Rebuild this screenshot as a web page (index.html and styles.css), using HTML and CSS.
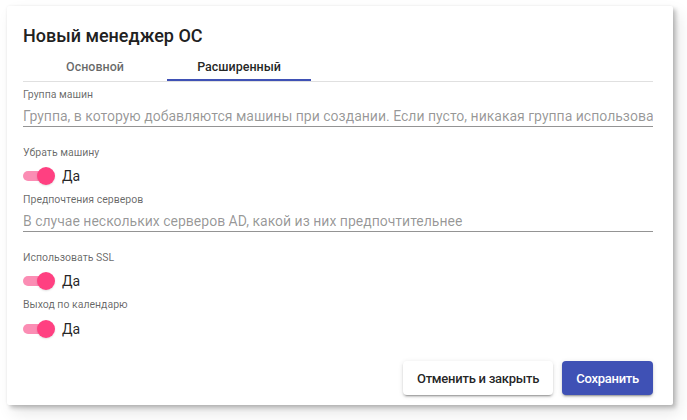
FILE: index.html
```html
<!DOCTYPE html>
<html lang="ru">

<head>
	<meta charset="UTF-8">
	<meta name="viewport" content="width=device-width, initial-scale=1.0">
	<title>Новый менеджер ОС</title>
	<link rel="stylesheet" href="styles.css">
</head>

<body>

	<div class="dialog">
		<h2 class="dialog-title">Новый менеджер ОС</h2>

		<div class="tab-header">
			<div class="tab">Основной</div>
			<div class="tab active">Расширенный</div>
		</div>

		<div class="tab-body">
			<div class="field">
				<label for="group">Группа машин</label>
				<input type="text" id="group" placeholder="Группа, в которую добавляются машины при создании. Если пусто, никакая группа использоваться не будет">
			</div>

			<div class="toggle-field">
				<div class="toggle-label">Убрать машину</div>
				<label class="toggle">
					<span class="toggle-bar"><span class="toggle-thumb"></span></span>
					<span class="toggle-text">Да</span>
				</label>
			</div>

			<div class="field">
				<label for="servers">Предпочтения серверов</label>
				<input type="text" id="servers" placeholder="В случае нескольких серверов AD, какой из них предпочтительнее">
			</div>

			<div class="toggle-field">
				<div class="toggle-label">Использовать SSL</div>
				<label class="toggle">
					<span class="toggle-bar"><span class="toggle-thumb"></span></span>
					<span class="toggle-text">Да</span>
				</label>
			</div>

			<div class="toggle-field">
				<div class="toggle-label">Выход по календарю</div>
				<label class="toggle">
					<span class="toggle-bar"><span class="toggle-thumb"></span></span>
					<span class="toggle-text">Да</span>
				</label>
			</div>
		</div>

		<div class="dialog-actions">
			<button class="btn btn-cancel" type="button">Отменить и закрыть</button>
			<button class="btn btn-save" type="button">Сохранить</button>
		</div>
	</div>

</body>
</html>
```

FILE: styles.css
```css
body {
	font-family: Roboto, "Liberation Sans", Arial, sans-serif;
	margin: 0;
	padding: 6px 14px 15px 7px;
	background-color: #ffffff;
	color: rgba(0, 0, 0, 0.87);
}

/* Dialog card */
.dialog {
	width: 666px;
	height: 399px;
	box-sizing: border-box;
	padding: 18px 20px 10px 16px;
	background: #fff;
	border-radius: 2px;
	display: flex;
	flex-direction: column;
	box-shadow: 3px 3px 4px rgba(0, 0, 0, 0.22), 6px 8px 16px rgba(0, 0, 0, 0.1), 0 0 3px rgba(0, 0, 0, 0.06);
}

.dialog-title {
	margin: 0;
	font-size: 18px;
	line-height: 24px;
	font-weight: 500;
	color: #212121;
}

/* Tabs */
.tab-header {
	display: flex;
	margin-top: 4px;
	border-bottom: 1px solid #e0e0e0;
}

.tab {
	position: relative;
	width: 144px;
	height: 29px;
	line-height: 29px;
	text-align: center;
	font-size: 12.5px;
	font-weight: 500;
	color: rgba(0, 0, 0, 0.6);
}

.tab.active {
	color: rgba(0, 0, 0, 0.87);
}

.tab.active::after {
	content: "";
	position: absolute;
	left: 0;
	right: 0;
	bottom: 0;
	height: 2px;
	background: #3f51b5;
}

.tab-body {
	padding-top: 6px;
}

/* Text fields */
.field {
	margin-bottom: 19px;
}

.field label,
.toggle-label {
	display: block;
	font-size: 10.5px;
	line-height: 13px;
	color: rgba(0, 0, 0, 0.6);
}

.field input {
	display: block;
	width: 100%;
	box-sizing: content-box;
	margin: 6px 0 0;
	padding: 0 0 1px;
	height: 18px;
	border: none;
	border-bottom: 1px solid rgba(0, 0, 0, 0.42);
	outline: none;
	font-family: inherit;
	font-size: 14px;
	line-height: 18px;
	color: rgba(0, 0, 0, 0.87);
	background: transparent;
}

.field input::placeholder {
	color: rgba(0, 0, 0, 0.42);
}

/* Slide toggles */
.toggle-field {
	margin-bottom: 7px;
}

.toggle {
	display: flex;
	align-items: center;
	gap: 7px;
	height: 20px;
	margin-top: 7px;
}

.toggle-field:last-child .toggle {
	margin-top: 8px;
}

.toggle-bar {
	position: relative;
	width: 30px;
	height: 10px;
	margin-right: 2px;
	border-radius: 5px;
	background: #fb8db4;
}

.toggle-thumb {
	position: absolute;
	top: -4px;
	left: 14px;
	width: 18px;
	height: 18px;
	border-radius: 50%;
	background: #ff4081;
	box-shadow: 0 1px 2px rgba(0, 0, 0, 0.12);
}

.toggle-text {
	font-size: 14px;
	line-height: 20px;
	color: rgba(0, 0, 0, 0.87);
}

/* Buttons */
.dialog-actions {
	display: flex;
	justify-content: flex-end;
	gap: 9px;
	margin-top: auto;
}

.btn {
	height: 34px;
	padding: 0 14px;
	border: none;
	border-radius: 4px;
	font-family: inherit;
	font-size: 13px;
	letter-spacing: -0.25px;
	font-weight: 500;
	cursor: pointer;
}

.btn-cancel {
	background: #fff;
	color: rgba(0, 0, 0, 0.87);
	box-shadow: 0 3px 1px -2px rgba(0, 0, 0, 0.2), 0 2px 2px 0 rgba(0, 0, 0, 0.14), 0 1px 5px 0 rgba(0, 0, 0, 0.12);
}

.btn-save {
	background: #3f51b5;
	color: #fff;
	box-shadow: 0 3px 1px -2px rgba(0, 0, 0, 0.2), 0 2px 2px 0 rgba(0, 0, 0, 0.14), 0 1px 5px 0 rgba(0, 0, 0, 0.12);
}
```
